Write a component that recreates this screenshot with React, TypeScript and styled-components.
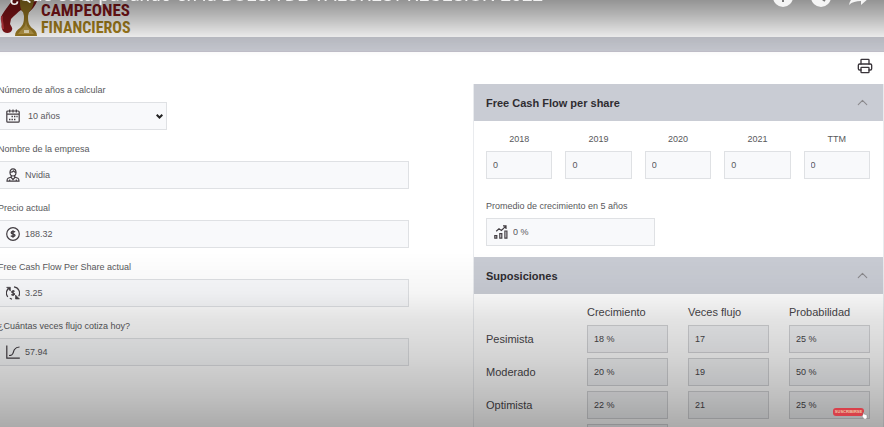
import React, { useState } from "react";
import styled, { createGlobalStyle } from "styled-components";
import { ChevronUp, Printer } from "lucide-react";

const GlobalStyle = createGlobalStyle`
  *, *::before, *::after { box-sizing: border-box; }
  body {
    margin: 0;
    overflow: hidden;
    background: #fff;
    color: #58585b;
    font-family: "Liberation Sans", Arial, sans-serif;
  }
  button, input, select { font: inherit; color: inherit; }
`;

const Page = styled.div`
  height: 100vh;
  overflow: hidden;
`;

const BrandBar = styled.header`
  display: flex;
  align-items: flex-end;
  gap: 3px;
  height: 37px;
  overflow: hidden;
`;

const BrandMark = styled.svg`
  flex: none;
  width: 38px;
  height: 38px;
`;

const BrandName = styled.div`
  display: flex;
  flex-direction: column;
  font-family: "Noto Sans ExtraCondensed", "Roboto Condensed", "Open Sans Condensed", "Liberation Sans", sans-serif;
  font-weight: 700;
  line-height: 18px;
`;

const BrandLine = styled.span<{ $tone: string; $size: number }>`
  color: ${(p) => p.$tone};
  font-size: ${(p) => p.$size}px;
`;

const Strip = styled.div`
  height: 15px;
  background: #c7c9d1;
  border-bottom: 1px solid #c2c0ca;
`;

const Tools = styled.div`
  display: flex;
  justify-content: flex-end;
  padding: 6px 11px 0 0;
  height: 32px;
`;

const IconButton = styled.button`
  display: flex;
  padding: 0;
  border: 0;
  height: 16px;
  background: none;
  color: #39343a;
`;

const Columns = styled.main`
  display: grid;
  grid-template-columns: 1fr 1fr;
  gap: 64px;
  margin-left: -2px;
`;

const Form = styled.form`
  display: flex;
  flex-direction: column;
  gap: 14px;
  padding-top: 1px;
`;

const Field = styled.div<{ $width?: string }>`
  display: flex;
  flex-direction: column;
  gap: 6px;
  width: ${(p) => p.$width ?? "100%"};
`;

const Label = styled.label<{ $center?: boolean }>`
  font-size: 9px;
  line-height: 11px;
  white-space: nowrap;
  text-align: ${(p) => (p.$center ? "center" : "left")};
`;

const Control = styled.div`
  display: flex;
  align-items: center;
  gap: 5px;
  height: 28px;
  padding-left: 7px;
  border: 1px solid #dfe1e4;
  background: #f8f9fb;
`;

const Glyph = styled.svg`
  flex: none;
  width: 14px;
  height: 14px;
  fill: none;
  stroke: #423d42;
  stroke-width: 1.2;
`;

const TextInput = styled.input`
  flex: 1;
  min-width: 0;
  height: 100%;
  padding: 0;
  border: 0;
  outline: 0;
  background: none;
  font-size: 9px;
`;

const Select = styled.select`
  flex: 1;
  height: 100%;
  min-width: 0;
  padding: 0 0 0 3px;
  border: 0;
  outline: 0;
  appearance: none;
  background: none;
  font-size: 9px;
`;

const SelectArrow = styled.svg`
  flex: none;
  width: 7px;
  height: 5px;
  margin-right: 3px;
  fill: none;
  stroke: #222;
  stroke-width: 2;
  pointer-events: none;
`;

const Panels = styled.div`
  border: solid #e9ebee;
  border-width: 0 1px;
`;

const PanelHeader = styled.button`
  display: flex;
  align-items: center;
  justify-content: space-between;
  width: 100%;
  height: 37px;
  padding: 0 12px;
  border: 0;
  background: #c9ccd4;
  color: #2f2c31;
  font-size: 11px;
  font-weight: 700;
  text-align: left;

  svg { color: #8b8a8d; }
`;

const PanelBody = styled.div<{ $pad: string }>`
  padding: ${(p) => p.$pad};
`;

const Years = styled.div`
  display: grid;
  grid-template-columns: repeat(5, 1fr);
  gap: 13px;
  margin-bottom: 22px;
`;

const BoxInput = styled.input`
  display: block;
  width: 100%;
  height: 28px;
  padding: 0 6px;
  border: 1px solid #dfe1e4;
  border-radius: 0;
  outline: 0;
  background: #f8f9fb;
  font-size: 9px;
`;

const Table = styled.table`
  width: calc(100% + 40px);
  margin: 0 -20px;
  table-layout: fixed;
  border-spacing: 20px 5px;
  color: #48464a;
  font-size: 11px;

  th, td { padding: 0; }
  th { font-weight: 400; text-align: left; line-height: 15px; }

  input {
    border-color: #d4d5d8;
    background: #f3f4f6;
  }
`;

const Shade = styled.div`
  position: fixed;
  inset: 0;
  pointer-events: none;
  background:
    linear-gradient(to bottom, rgba(0, 0, 0, 0.42) 0, rgba(0, 0, 0, 0.3) 14px, rgba(0, 0, 0, 0.09) 36px, transparent 56px),
    linear-gradient(to top, rgba(0, 0, 0, 0.33) 0, rgba(0, 0, 0, 0.25) 30px, rgba(0, 0, 0, 0.17) 70px, rgba(0, 0, 0, 0.11) 107px, rgba(0, 0, 0, 0.04) 134px, transparent 175px);
`;

const VideoTitle = styled.h1`
  position: fixed;
  top: -16px;
  left: 10px;
  margin: 0;
  color: #f2f2f2;
  font-family: Roboto, sans-serif;
  font-size: 19px;
  font-weight: 400;
  line-height: 22px;
  white-space: nowrap;
`;

const VideoActions = styled.div`
  position: fixed;
  top: -13px;
  right: 15px;
  display: flex;
  gap: 18px;
`;

const VideoButton = styled.button`
  display: flex;
  padding: 0;
  border: 0;
  background: none;

  svg { width: 20px; height: 20px; }
`;

const Subscribe = styled.button`
  position: fixed;
  right: 20px;
  bottom: 11px;
  width: 31px;
  height: 8px;
  padding: 0;
  border: 0;
  border-radius: 3px;
  background: #d9404a;
  color: #f0c9a8;
  font-size: 4px;
  font-weight: 700;
  line-height: 8px;
  text-align: center;
`;

const Pointer = styled.svg`
  position: fixed;
  right: 16px;
  bottom: 8px;
  width: 6px;
  height: 7px;
`;

const fields = [
  { id: "company", label: "Nombre de la empresa", value: "Nvidia", icon: "person" },
  { id: "price", label: "Precio actual", value: "188.32", icon: "dollar" },
  { id: "fcf", label: "Free Cash Flow Per Share actual", value: "3.25", icon: "cycle" },
  { id: "multiple", label: "¿Cuántas veces flujo cotiza hoy?", value: "57.94", icon: "curve" },
];

const years = ["2018", "2019", "2020", "2021", "TTM"];

const scenarios = [
  { name: "Pesimista", values: ["18 %", "17", "25 %"] },
  { name: "Moderado", values: ["20 %", "19", "50 %"] },
  { name: "Optimista", values: ["22 %", "21", "25 %"] },
];

const metrics = ["Crecimiento", "Veces flujo", "Probabilidad"];

const drawings: Record<string, React.ReactNode> = {
  calendar: (
    <>
      <rect x="0.8" y="2" width="12.4" height="11.2" rx="1" />
      <path d="M1 5.2h12M3.7 0.5v3M7 0.5v3M10.3 0.5v3" />
      <path d="M5.5 7.6h1.4M8 7.6h1.4M10.4 7.6h1.2M3 10.4h1.4M5.5 10.4h1.4M8 10.4h1.4" strokeWidth="1.5" />
    </>
  ),
  person: (
    <>
      <path d="M4 4.5C4 2.2 5.1.8 7 .8s3 1.4 3 3.7C10 6.7 8.8 8 7 8S4 6.7 4 4.5Z" />
      <path d="M4 4.2C5.8 4.4 7 3.6 7.5 2.9 8.2 3.8 9 4.2 10 4.3M5.3 7.6v1.5L2 10.3c-.8.3-1 1-1 2.9h12c0-1.900-.2-2.600-1-2.900L8.700 9.100V7.600M5 9.300l2 2.200 2-2.200M3.700 11.500v1.500M10.300 11.500v1.500" />
    </>
  ),
  dollar: (
    <>
      <circle cx="7" cy="7" r="6.3" />
      <path d="M9 5.200C8.400 4.300 5.200 4.200 5.200 5.800S9 6.900 9 8.300 5.500 9.800 4.900 8.700M7 3.200v7.600" strokeWidth="1.400" />
    </>
  ),
  cycle: (
    <>
      <path d="M1.800 10.800A6.200 6.200 0 0 1 2 3M6 13.100a6 6 0 0 1-2.200-.8M8 .9a6.200 6.200 0 0 1 4.700 9.300" />
      <path d="M.6 1.300h3.800v3.800ZM9.500 9v4h4Z" fill="#423d42" strokeWidth=".6" />
      <path d="M8.600 5.500C8 4.700 5.600 4.800 5.700 6s2.900.8 2.900 2-2.500 1.300-3.200.4M7.100 3.900v6.200" />
    </>
  ),
  curve: <path d="M.8.5v12.700h13M3 10.500c5 0 3.500-3 5.500-6C9.700 2.700 11 2 13.500 2" />,
  growth: (
    <>
      <path d="M.8 10.700h2v2.500h-2ZM5.800 8.700h2v4.500h-2ZM10.900 6h2v7.200h-2Z" />
      <path d="M2.200 6.200 5 3.800l2.400 1.600 4.200-4M9 .9h3v3" />
    </>
  ),
};

function Icon({ name }: { name: string }) {
  return (
    <Glyph viewBox="0 0 14 14" aria-hidden="true">
      {drawings[name]}
    </Glyph>
  );
}

function Brand() {
  return (
    <BrandBar>
      <BrandMark viewBox="0 0 38 38" aria-hidden="true">
        <path d="M13 0C10 5 5 11 2 16c-1 3 0 6 0 9-1 3 0 6 2 8 3 2 7 1 8-2 1-2-1-4-2-6l1-5c3-3 7-7 10-9l5 4c4-2 9-7 11-13l-7 1-5 5-6-8Z" fill="#851619" />
        <path d="M2 17c-1 4 1 7 1 13" fill="none" stroke="#c73a42" strokeWidth="2" />
        <path d="M20 0h14c0 6-2 10-5 13l-1 4c0 7 1 9 4 12 3 2 5 4 5 8H15c0-4 2-6 5-8 3-3 4-5 4-12l-1-4C20 10 20 6 20 0Z" fill="#9a7a24" />
        <path d="M26 18c0 8-1 10-5 13l-3 4h16l-3-4c-4-3-5-5-5-13Z" fill="#b89a48" />
        <path d="M24 31h5v3h-5Z" fill="#eee2bc" />
      </BrandMark>
      <BrandName>
        <BrandLine $tone="#87171b" $size={17}>CAMPEONES</BrandLine>
        <BrandLine $tone="#a5801c" $size={16}>FINANCIEROS</BrandLine>
      </BrandName>
    </BrandBar>
  );
}

function Panel({ title, pad, children }: { title: string; pad: string; children: React.ReactNode }) {
  const [open, setOpen] = useState(true);
  return (
    <section>
      <PanelHeader type="button" aria-expanded={open} onClick={() => setOpen(!open)}>
        {title}
        <ChevronUp size={17} strokeWidth={1.5} />
      </PanelHeader>
      {open && <PanelBody $pad={pad}>{children}</PanelBody>}
    </section>
  );
}

export default function App() {
  return (
    <>
      <GlobalStyle />
      <Page>
        <Brand />
        <Strip />
        <Tools>
          <IconButton aria-label="Imprimir"><Printer size={16} strokeWidth={2} /></IconButton>
        </Tools>
        <Columns>
          <Form>
            <Field $width="169px">
              <Label htmlFor="years">Número de años a calcular</Label>
              <Control>
                <Icon name="calendar" />
                <Select id="years" defaultValue="10">
                  <option value="10">10 años</option>
                </Select>
                <SelectArrow viewBox="0 0 7 5"><path d="M.7.8 3.500 3.500 6.300.8" /></SelectArrow>
              </Control>
            </Field>
            {fields.map((f) => (
              <Field key={f.id}>
                <Label htmlFor={f.id}>{f.label}</Label>
                <Control>
                  <Icon name={f.icon} />
                  <TextInput id={f.id} defaultValue={f.value} />
                </Control>
              </Field>
            ))}
          </Form>
          <Panels>
            <Panel title="Free Cash Flow per share" pad="13px 13px 11px 12px">
              <Years>
                {years.map((y) => (
                  <Field key={y}>
                    <Label htmlFor={`y${y}`} $center>{y}</Label>
                    <BoxInput id={`y${y}`} defaultValue="0" />
                  </Field>
                ))}
              </Years>
              <Field $width="169px">
                <Label htmlFor="average">Promedio de crecimiento en 5 años</Label>
                <Control>
                  <Icon name="growth" />
                  <TextInput id="average" defaultValue="0 %" />
                </Control>
              </Field>
            </Panel>
            <Panel title="Suposiciones" pad="6px 13px 7px 12px">
              <Table>
                <thead>
                  <tr>
                    <td />
                    {metrics.map((m) => <th key={m} scope="col">{m}</th>)}
                  </tr>
                </thead>
                <tbody>
                  {scenarios.map((s) => (
                    <tr key={s.name}>
                      <th scope="row">{s.name}</th>
                      {s.values.map((v, i) => (
                        <td key={metrics[i]}>
                          <BoxInput aria-label={`${metrics[i]} ${s.name}`} defaultValue={v} />
                        </td>
                      ))}
                    </tr>
                  ))}
                  <tr>
                    <td />
                    <td><BoxInput aria-label="Crecimiento total" /></td>
                  </tr>
                </tbody>
              </Table>
            </Panel>
          </Panels>
        </Columns>
      </Page>
      <Shade />
      <VideoTitle>¿Qué está pasando en la BOLSA DE VALORES? RECESIÓN 2022</VideoTitle>
      <VideoActions>
        <VideoButton aria-label="Añadir">
          <svg viewBox="0 0 20 20"><circle cx="10" cy="10" r="10" fill="#f4f4f4" /><path d="M10 5v10M5 10h10" stroke="#777" strokeWidth="2" /></svg>
        </VideoButton>
        <VideoButton aria-label="Ver más tarde">
          <svg viewBox="0 0 20 20"><circle cx="10" cy="10" r="10" fill="#f4f4f4" /><path d="M10 4v7l4 3" fill="none" stroke="#777" strokeWidth="2" /></svg>
        </VideoButton>
        <VideoButton aria-label="Compartir">
          <svg viewBox="0 0 20 20"><path d="M12 4l8 7-8 7v-4c-5 0-9 1-12 4 1-6 5-9 12-10Z" fill="#f4f4f4" /></svg>
        </VideoButton>
      </VideoActions>
      <Subscribe>SUSCRIBIRSE</Subscribe>
      <Pointer viewBox="0 0 6 7" aria-hidden="true">
        <path d="M1 0l1 2 3 1v3l-1 1H2L0 4l1-1Z" fill="#fff" stroke="#777" strokeWidth=".4" />
      </Pointer>
    </>
  );
}
